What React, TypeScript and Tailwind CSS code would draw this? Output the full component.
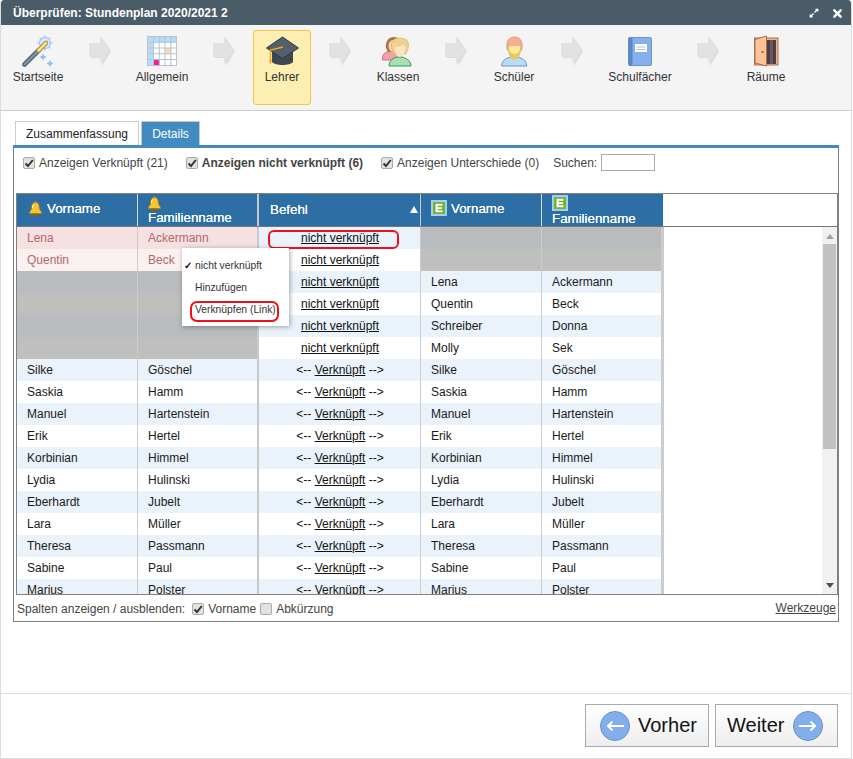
import React from "react";
import { FaExpandAlt, FaTimes } from "react-icons/fa";

const Wand = () => (
  <svg width="32" height="32" viewBox="0 0 32 32">
    <g stroke="#a9cffa" strokeWidth="1.2">
      <path d="M23 0v16M15 8h16M17.5 2.5l11 11M28.5 2.5l-11 11" />
    </g>
    <circle cx="23" cy="8" r="5.5" fill="#d6e9fd" stroke="#8fbdf4" />
    <path d="M2.5 29.5 17 15" stroke="#4f6273" strokeWidth="4.6" strokeLinecap="round" />
    <path d="M2.5 29.5 17 15" stroke="#7d93a6" strokeWidth="2.4" strokeLinecap="round" />
    <path d="M16.5 15.5 24 8" stroke="#a88a4a" strokeWidth="4.6" strokeLinecap="round" />
    <path d="M16.5 15.5 24 8" stroke="#fbe08c" strokeWidth="2.6" strokeLinecap="round" />
    <path d="M21 18.5l1.2 2.3 2.3 1.2-2.3 1.2-1.2 2.3-1.2-2.3-2.3-1.2 2.3-1.2z" fill="#8fbdf4" />
    <path d="M28 25l1.2 2.3 2.3 1.2-2.3 1.2-1.2 2.3-1.2-2.3-2.3-1.2 2.3-1.2z" fill="#8fbdf4" />
  </svg>
);

const Calendar = () => (
  <svg width="30" height="30" viewBox="0 0 30 30">
    <rect x="0.5" y="0.5" width="29" height="29" fill="#fff" />
    <rect x="0.5" y="0.5" width="29" height="6" fill="#b7dcf9" />
    <rect x="0.5" y="0.5" width="6" height="29" fill="#b7dcf9" />
    <rect x="18" y="12" width="6" height="6" fill="#fbd9bd" />
    <rect x="6.5" y="23.5" width="6" height="6" fill="#f31d8b" />
    <path d="M.5 .5h29v29H.5zM6.5 .5v29M12.3 .5v29M18 .5v29M23.8 .5v29M.5 6.3h29M.5 12h29M.5 17.8h29M.5 23.5h29" fill="none" stroke="#b5c4d3" strokeWidth="1" />
  </svg>
);

const Cap = () => (
  <svg width="33" height="30" viewBox="0 0 33 30">
    <path d="M6 15v11c3 4 18 4 21 0V15z" fill="#3e4650" />
    <path d="M16.5 1 32.5 12 16.5 22.5.5 12z" fill="#55606c" stroke="#2f3740" strokeWidth="1" />
    <path d="M17 11 4.5 14v11" fill="none" stroke="#f2a21c" strokeWidth="1.4" />
    <path d="M3 24h3l-1.5 5z" fill="#f2a21c" />
  </svg>
);

const Klassen = () => (
  <svg width="33" height="31" viewBox="0 0 33 31">
    <path d="M0.5 22c0-5 5-7 9-7s9 2 9 7v2H0.5z" fill="#f4a0a8" stroke="#d9707e" />
    <path d="M4 12C3 4 8 1 12 1s8 3 7 10l-3 5H6z" fill="#b0704a" />
    <ellipse cx="11" cy="10" rx="4.5" ry="6" fill="#fbd2ae" />
    <path d="M7 30c0-6 5-8 8-9h5c3 1 9 3 9 9z" fill="#abdeb2" stroke="#2f9a58" />
    <path d="M10 13C8 5 12 2 18 2s10 3 8 11l-2 5H12z" fill="#eed18e" stroke="#d8b670" strokeWidth=".7" />
    <path d="M13 11c3 0 7-1 9-3l1.500 3c0 5-3 10-6 10s-5-5-4.500-10z" fill="#fde3bd" />
  </svg>
);

const Schueler = () => (
  <svg width="27" height="31" viewBox="0 0 27 31">
    <path d="M.7 30c0-6 5-8 9-9h7c4 1 9 3 9 9z" fill="#b7dcf8" stroke="#7393c4" />
    <path d="M6 12C5 4 9 1 13.500 1S22 4 21 12l-1 3H7z" fill="#f4ae90" stroke="#d8866a" strokeWidth=".7" />
    <path d="M7 11c3 0 9 0 13 0 .5 6-2 13-6.500 13S6.500 17 7 11z" fill="#e8c864" />
    <path d="M8 10h11c.4 4-1.500 8-5.500 8S7.600 14 8 10z" fill="#fcea9a" />
  </svg>
);

const Book = () => (
  <svg width="24" height="29" viewBox="0 0 24 29">
    <rect x=".5" y=".5" width="23" height="28" rx="1.500" fill="#84b1ed" stroke="#6a94d0" />
    <rect x=".5" y=".5" width="4" height="28" rx="1" fill="#5c88c6" />
    <rect x="7" y="7" width="12" height="8" fill="#fff" />
    <path d="M8.500 10h9M8.500 12.500h9" stroke="#a9c5ee" strokeWidth="1" />
  </svg>
);

const Door = () => (
  <svg width="25" height="32" viewBox="0 0 25 32">
    <rect x="0.500" y="3" width="23.500" height="27" fill="#f0b48c" stroke="#a8704e" />
    <rect x="12" y="5" width="10" height="24" fill="#4e3f47" />
    <rect x="16" y="5" width="3" height="24" fill="#6a5860" />
    <path d="M1 4.500 12.500 1v30L1 28z" fill="#fcc496" stroke="#a8704e" />
    <rect x="7.500" y="16" width="2" height="2" fill="#a8603c" />
  </svg>
);

const Arrow = () => (
  <svg width="22" height="30" viewBox="0 0 22 30" className="blur-[0.6px]">
    <path d="M2 8h11V2l9 13-9 15v-8H2z" fill="#dbdbdb" />
    <path d="M0 7h11V0l10 14-10 14v-7H0z" fill="#e2e2e2" />
  </svg>
);

const Bell = () => (
  <svg width="13" height="15" viewBox="0 0 13 15">
    <circle cx="6.500" cy="1.500" r="1.200" fill="#b98a1c" />
    <path d="M6.500 1.500c3 0 3.800 2.300 3.800 5 0 2 1.200 3.200 2.200 4.500v1.500H.500V11c1-1.300 2.200-2.500 2.200-4.500 0-2.700.8-5 3.800-5z" fill="#f7c531" stroke="#a87c16" strokeWidth=".7" />
    <path d="M4.500 3.500c-.8 1-1 2-1 3.500" stroke="#fff3b8" strokeWidth="1" fill="none" />
    <rect x="3" y="12.800" width="7" height="2" rx="1" fill="#8a6410" />
  </svg>
);

const EIcon = () => (
  <svg width="16" height="16" viewBox="0 0 16 16">
    <rect width="16" height="16" fill="#a9cdf2" />
    <rect x="2" y="2" width="12" height="12" fill="#6cb52d" />
    <path d="M4.500 3.800h7v2h-4.800v1.400h4.300v1.700H6.700v1.300h4.800v2h-7z" fill="#fff" />
  </svg>
);

const Check = ({ checked = true }: { checked?: boolean }) => (
  <span className="w-[12px] h-[12px] shrink-0 rounded-[2px] border border-[#aaaaaa] bg-[#e2e2e2] flex items-center justify-center">
    {checked && (
      <svg width="10" height="10" viewBox="0 0 10 10">
        <path d="M1.500 5.500 4 8l4.800-6" fill="none" stroke="#333" strokeWidth="2" />
      </svg>
    )}
  </span>
);

const steps: { label: string; w: string; icon: React.ReactNode; active?: boolean }[] = [
  { label: "Startseite", w: "w-[66px]", icon: <Wand /> },
  { label: "Allgemein", w: "w-[66px]", icon: <Calendar /> },
  { label: "Lehrer", w: "w-[58px]", icon: <Cap />, active: true },
  { label: "Klassen", w: "w-[58px]", icon: <Klassen /> },
  { label: "Schüler", w: "w-[58px]", icon: <Schueler /> },
  { label: "Schulfächer", w: "w-[78px]", icon: <Book /> },
  { label: "Räume", w: "w-[58px]", icon: <Door /> },
];

type Row = { l?: [string, string]; r?: [string, string]; link?: boolean; tone?: "a" | "b" };

const linked = [
  ["Silke", "Göschel"],
  ["Saskia", "Hamm"],
  ["Manuel", "Hartenstein"],
  ["Erik", "Hertel"],
  ["Korbinian", "Himmel"],
  ["Lydia", "Hulinski"],
  ["Eberhardt", "Jubelt"],
  ["Lara", "Müller"],
  ["Theresa", "Passmann"],
  ["Sabine", "Paul"],
  ["Marius", "Polster"],
] as [string, string][];

const rows: Row[] = [
  { l: ["Lena", "Ackermann"], link: true, tone: "a" },
  { l: ["Quentin", "Beck"], link: true, tone: "b" },
  { r: ["Lena", "Ackermann"], link: true },
  { r: ["Quentin", "Beck"], link: true },
  { r: ["Schreiber", "Donna"], link: true },
  { r: ["Molly", "Sek"], link: true },
  ...linked.map((p) => ({ l: p, r: p })),
];

function Cell({ text, bg, sep, color }: { text?: string; bg: string; sep: string; color?: string }) {
  return (
    <div className={`h-[22px] pl-[10px] leading-[22px] overflow-hidden whitespace-nowrap ${bg} ${sep} ${color ?? "text-[#1a1a1a]"}`}>
      {text}
    </div>
  );
}

function Label({ children, bold }: { children: React.ReactNode; bold?: boolean }) {
  return <span className={`text-[#444] ${bold ? "font-bold" : ""}`}>{children}</span>;
}

export default function App() {
  return (
    <div className="w-[853px] h-[759px] bg-white overflow-hidden text-[12px] font-['Liberation_Sans',Arial,sans-serif]">
      <div className="w-[852px] h-[759px] flex flex-col border-l border-b border-r border-[#dddddd] rounded-t-[4px] overflow-hidden">
        {/* title bar */}
        <div className="h-[25px] shrink-0 bg-[#4a5c68] flex items-center pl-[12px] pr-[7px] text-white font-bold">
          <span>Überprüfen: Stundenplan 2020/2021 2</span>
          <FaExpandAlt className="ml-auto mt-[1px] text-[10px]" />
          <FaTimes className="ml-[12px] mt-[1px] text-[13px]" />
        </div>

        {/* wizard steps */}
        <div className="h-[86px] shrink-0 bg-[#f4f4f4] border-b border-[#cccccc] flex items-start gap-[18px] pl-[4px] pt-[5px]">
          {steps.map((s, i) => (
            <React.Fragment key={s.label}>
              <div
                className={`${s.w} h-[75px] shrink-0 flex flex-col items-center rounded-[3px] border ${
                  s.active ? "bg-[#fdeeb2] border-[#f3c34a]" : "border-transparent"
                }`}
              >
                <div className="h-[36px] mt-[2px] flex items-center justify-center">{s.icon}</div>
                <span className="-mt-[1px] text-[#333]">{s.label}</span>
              </div>
              {i < steps.length - 1 && (
                <div className="w-[22px] h-[30px] mt-[6px] shrink-0">
                  <Arrow />
                </div>
              )}
            </React.Fragment>
          ))}
        </div>

        {/* main */}
        <div className="flex-1 pl-[12px] pt-[10px] border-b border-[#dddddd]">
          <div className="flex gap-[2px] pl-[2px] h-[24px]">
            <div className="w-[124px] border border-b-0 border-[#cccccc] flex items-center justify-center text-[#222]">
              Zusammenfassung
            </div>
            <div className="w-[59px] bg-[#428bc1] border border-b-0 border-[#c8c8c8] flex items-center justify-center text-white">
              Details
            </div>
          </div>

          <div className="w-[826px] h-[477px] border border-t-[3px] border-[#808080] border-t-[#428bc1] flex flex-col">
            {/* filters */}
            <div className="h-[45px] shrink-0 flex items-start pl-[9px] pt-[6px]">
              <div className="flex items-center h-[17px] gap-[4px]">
                <Check />
                <Label>Anzeigen Verknüpft (21)</Label>
                <span className="w-[10px]" />
                <Check />
                <Label bold>Anzeigen nicht verknüpft (6)</Label>
                <span className="w-[10px]" />
                <Check />
                <Label>Anzeigen Unterschiede (0)</Label>
                <span className="w-[6px]" />
                <Label>Suchen:</Label>
                <div className="w-[54px] h-[17px] border border-[#aaaaaa] bg-white" />
              </div>
            </div>

            {/* grid */}
            <div className="ml-[2px] w-[822px] h-[402px] shrink-0 border border-[#808080] overflow-hidden flex flex-col">
              <div className="h-[33px] shrink-0 border-b border-[#777777] flex text-white text-[13.33px] leading-[15px] [text-shadow:0_0_0.6px_#ffffff]">
                <div className="grid grid-cols-[121px_121px_162px_121px_121px] w-[646px] bg-[#2d6ea4]">
                  <div className="border-r border-[#dddddd] pl-[12px] flex items-center gap-[5px] pb-[4px]">
                    <Bell />
                    <span>Vorname</span>
                  </div>
                  <div className="border-r-2 border-[#c8c8c8] pl-[10px] pt-[2px] flex flex-col items-start">
                    <Bell />
                    <span className="-mt-[1px]">Familienname</span>
                  </div>
                  <div className="border-r border-[#c8c8c8] pl-[11px] pr-[2px] pb-[2px] flex items-center justify-between">
                    <span>Befehl</span>
                    <svg width="8" height="7" viewBox="0 0 8 7">
                      <path d="M4 0l4 7H0z" fill="#fff" />
                    </svg>
                  </div>
                  <div className="border-r border-[#dddddd] pl-[10px] flex items-center gap-[4px] pb-[4px]">
                    <EIcon />
                    <span>Vorname</span>
                  </div>
                  <div className="pl-[10px] pt-[1px] flex flex-col items-start">
                    <EIcon />
                    <span>Familienname</span>
                  </div>
                </div>
              </div>

              <div className="relative flex-1 overflow-hidden">
                <div className="w-[647px] flex flex-col">
                  {rows.map((r, i) => {
                    const stripe = i % 2 === 0 ? "bg-[#eaf3fc]" : "bg-white";
                    const leftBg = r.tone === "a" ? "bg-[#f5e0e2]" : r.tone === "b" ? "bg-[#faf0ef]" : r.l ? stripe : i % 2 === 0 ? "bg-[#b9bcbe]" : "bg-[#bfc0be]";
                    const rightBg = r.r ? stripe : i % 2 === 0 ? "bg-[#b9bcbe]" : "bg-[#bfc0be]";
                    const c = r.tone ? "text-[#b36a68]" : undefined;
                    return (
                      <div key={i} className="grid grid-cols-[121px_121px_162px_121px_122px] h-[22px] shrink-0">
                        <Cell text={r.l?.[0]} bg={leftBg} sep="border-r border-[#cccccc]" color={c} />
                        <Cell text={r.l?.[1]} bg={leftBg} sep="border-r-2 border-[#c8c8c8]" color={c} />
                        <div className={`h-[22px] leading-[22px] pl-[1px] text-center text-[#111] border-r border-[#cccccc] ${stripe}`}>
                          {r.link ? (
                            <span className="underline">nicht verknüpft</span>
                          ) : (
                            <span>
                              {"<-- "}
                              <span className="underline">Verknüpft</span>
                              {" -->"}
                            </span>
                          )}
                        </div>
                        <Cell text={r.r?.[0]} bg={rightBg} sep="border-r border-[#cccccc]" />
                        <Cell text={r.r?.[1]} bg={rightBg} sep="border-r-[3px] border-[#cccccc]" />
                      </div>
                    );
                  })}
                </div>

                {/* highlight on first link */}
                <div className="absolute left-[251px] top-[3px] w-[131px] h-[19px] rounded-[6px] border-2 border-[#f0101c]" />

                {/* context menu */}
                <div className="absolute left-[165px] top-[21px] w-[107px] h-[78px] bg-white shadow-[1px_1px_5px_rgba(0,0,0,0.35)] pt-[7px] text-[10.3px] text-[#333]">
                  <div className="h-[22px] leading-[22px] pl-[2px] flex">
                    <span className="w-[11px] text-[#111] font-bold">✓</span>
                    <span>nicht verknüpft</span>
                  </div>
                  <div className="h-[22px] leading-[22px] pl-[13px]">Hinzufügen</div>
                  <div className="h-[22px] leading-[22px] pl-[13px]">Verknüpfen (Link)</div>
                  <div className="absolute left-[8px] top-[53px] w-[89px] h-[21px] rounded-[7px] border-2 border-[#f0101c]" />
                </div>

                {/* scrollbar */}
                <div className="absolute right-0 top-0 bottom-0 w-[15px] bg-[#f1f1f1] flex flex-col items-center">
                  <svg width="8" height="5" viewBox="0 0 8 5" className="mt-[7px] shrink-0">
                    <path d="M4 0l4 5H0z" fill="#a3a3a3" />
                  </svg>
                  <div className="w-[13px] h-[205px] mt-[5px] bg-[#c1c1c1] shrink-0" />
                  <svg width="8" height="5" viewBox="0 0 8 5" className="mt-auto mb-[6px] shrink-0">
                    <path d="M0 0h8L4 5z" fill="#505050" />
                  </svg>
                </div>
              </div>
            </div>

            {/* grid footer */}
            <div className="flex-1 flex items-start pl-[3px] pr-[2px] text-[#444]">
              <div className="flex items-center h-[27px] gap-[4px]">
                <span className="mr-[3px]">Spalten anzeigen / ausblenden:</span>
                <Check />
                <span>Vorname</span>
                <Check checked={false} />
                <span>Abkürzung</span>
              </div>
              <span className="ml-auto underline mt-[4px]">Werkzeuge</span>
            </div>
          </div>
        </div>

        {/* buttons */}
        <div className="h-[64px] shrink-0 flex justify-end items-start gap-[6px] pt-[10px] pr-[13px]">
          <button className="w-[124px] h-[43px] border border-[#aaaaaa] bg-gradient-to-b from-white to-[#eeeeee] flex items-center pl-[14px] gap-[8px] text-[20px] text-[#111] pb-[2px]">
            <svg width="30" height="30" viewBox="0 0 30 30" className="mt-[2px]">
              <circle cx="15" cy="15" r="14.500" fill="#82afeb" stroke="#6690cc" />
              <path d="M24 15H8M12.500 10.500 8 15l4.500 4.500" fill="none" stroke="#fff" strokeWidth="2" />
            </svg>
            <span>Vorher</span>
          </button>
          <button className="w-[123px] h-[43px] border border-[#aaaaaa] bg-gradient-to-b from-white to-[#eeeeee] flex items-center pl-[11px] gap-[9px] text-[20px] text-[#111] pb-[2px]">
            <span>Weiter</span>
            <svg width="30" height="30" viewBox="0 0 30 30" className="mt-[2px]">
              <circle cx="15" cy="15" r="14.500" fill="#82afeb" stroke="#6690cc" />
              <path d="M6 15h16M17.500 10.500 22 15l-4.500 4.500" fill="none" stroke="#fff" strokeWidth="2" />
            </svg>
          </button>
        </div>
      </div>
    </div>
  );
}
